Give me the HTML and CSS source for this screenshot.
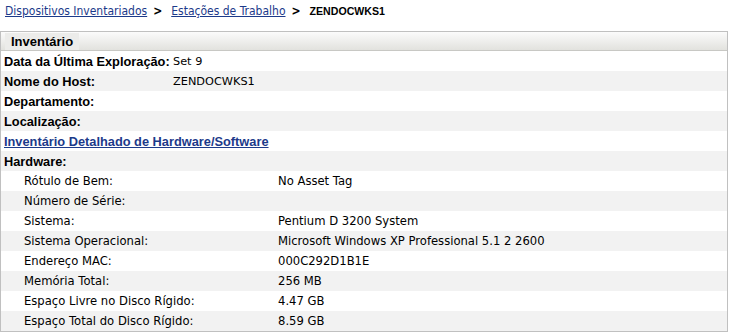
FILE: index.html
```html
<!DOCTYPE html>
<html lang="pt">
<head>
    <meta charset="UTF-8">
    <title>ZENDOCWKS1</title>
    <link rel="stylesheet" href="styles.css">
</head>
<body>
    <div class="breadcrumb">
        <a href="#">Dispositivos Inventariados</a>
        <span class="sep">&gt;</span>
        <a href="#">Estações de Trabalho</a>
        <span class="sep">&gt;</span>
        <strong>ZENDOCWKS1</strong>
    </div>

    <div class="panel">
        <div class="panel-header"><span class="panel-title">Inventário</span></div>
        <div class="row"><span class="label">Data da Última Exploração:</span><span class="value">Set 9</span></div>
        <div class="row alt"><span class="label">Nome do Host:</span><span class="value">ZENDOCWKS1</span></div>
        <div class="row"><span class="label">Departamento:</span></div>
        <div class="row alt"><span class="label">Localização:</span></div>
        <div class="row"><a class="label link" href="#">Inventário Detalhado de Hardware/Software</a></div>
        <div class="row alt"><span class="label">Hardware:</span></div>

        <div class="hw-row"><span class="hw-label">Rótulo de Bem:</span><span>No Asset Tag</span></div>
        <div class="hw-row alt"><span class="hw-label">Número de Série:</span><span></span></div>
        <div class="hw-row"><span class="hw-label">Sistema:</span><span>Pentium D 3200 System</span></div>
        <div class="hw-row alt"><span class="hw-label">Sistema Operacional:</span><span>Microsoft Windows XP Professional 5.1 2 2600</span></div>
        <div class="hw-row"><span class="hw-label">Endereço MAC:</span><span>000C292D1B1E</span></div>
        <div class="hw-row alt"><span class="hw-label">Memória Total:</span><span>256 MB</span></div>
        <div class="hw-row"><span class="hw-label">Espaço Livre no Disco Rígido:</span><span>4.47 GB</span></div>
        <div class="hw-row alt"><span class="hw-label">Espaço Total do Disco Rígido:</span><span>8.59 GB</span></div>
    </div>
</body>
</html>
```

FILE: styles.css
```css
body {
    margin: 0;
    font-family: "DejaVu Sans", Verdana, sans-serif;
    font-size: 11.6px;
    color: #000;
    background-color: #fff;
}
a {
    color: #1c3a8a;
}
.breadcrumb {
    height: 22px;
    padding-left: 5px;
    display: flex;
    align-items: center;
    font-family: "DejaVu Sans Condensed", "DejaVu Sans", sans-serif;
    font-size: 12px;
}
.breadcrumb .sep {
    font-weight: bold;
    margin: 0 9px 0 6px;
}
.breadcrumb strong {
    font-family: "Liberation Sans", Arial, sans-serif;
    font-size: 10.6px;
}
.panel {
    margin-top: 9px;
    width: 726px;
    border: 1px solid #c0c0c0;
}
.panel-header {
    height: 18px;
    border-bottom: 1px solid #c8c8c4;
    background: linear-gradient(#fbfbfb, #e2e2de);
    display: flex;
    align-items: center;
}
.panel-title {
    margin-left: 4px;
    padding: 1px 6px 1px 6px;
    background-color: #ececea;
    font-family: "Liberation Sans", Arial, sans-serif;
    font-size: 13px;
    font-weight: bold;
}
.row {
    height: 20px;
    display: flex;
    align-items: center;
    padding-left: 3px;
}
.row .label {
    width: 169px;
    font-family: "Liberation Sans", Arial, sans-serif;
    font-size: 12.8px;
    font-weight: bold;
    white-space: nowrap;
}
.row .value {
    font-size: 11.3px;
}
.row .link {
    color: #1c3a8a;
}
.alt {
    background-color: #f2f2f2;
}
.hw-row {
    height: 20px;
    display: flex;
    align-items: center;
    padding-left: 23px;
}
.hw-label {
    width: 254px;
}
```
